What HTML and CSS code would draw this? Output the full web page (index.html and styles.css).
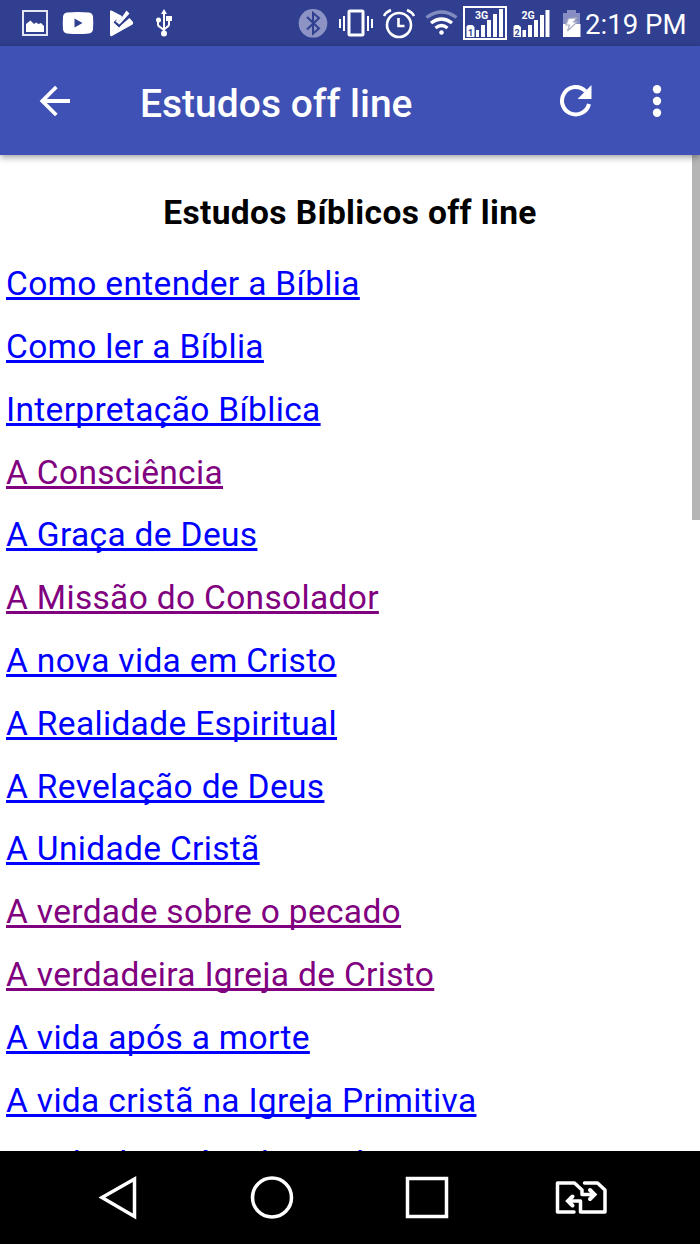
FILE: index.html
```html
<!DOCTYPE html>
<html lang="pt">
<head>
<meta charset="utf-8">
<title>Estudos off line</title>
<link rel="stylesheet" href="styles.css">
</head>
<body>
<div class="screen">
  <header class="status">
    <svg class="status-icons" width="585" height="46" viewBox="0 0 585 46" fill="#fff">
      <path d="M23 11H47V35H23z" fill="none" stroke="#e4e6f4" stroke-width="2"/>
      <path d="M26 32V24L30.500 20.500 34 24 36 22.500 38.500 24 41 23 44 26V32z"/>
      <path fill-rule="evenodd" d="M67 12.500Q78 11.500 89 12.500Q92.500 13 93 16.500Q93.500 23 93 29.500Q92.500 33 89 33.500Q78 34.500 67 33.500Q63.500 33 63 29.500Q62.500 23 63 16.500Q63.500 13 67 12.500zM74.500 18.500V27.500L82.500 23z"/>
      <path d="M110 11.500Q110 10 111.500 10.500L121 15.500Q123 16.500 121 19L119 21.500 116.500 19.500 114 22 119 27 129.500 18 133 22Q133.500 23.500 132.500 24.500L112 36Q110 36.500 110 35z"/>
      <path d="M114.500 21.500L119 25.500 129 12.500" fill="none" stroke="#303f8f" stroke-width="2.600"/>
      <path d="M117 19.500L119 21.500 126.500 10.500 129.500 13.500 119.500 24.500 115.500 21.500z"/>
      <g fill="none" stroke="#fff" stroke-width="2"><path d="M164 33V13M158 21V24.500Q158 26 160 27L164 30M169 21V24.500Q169 26 167 27L164 29.500"/></g>
      <path d="M164 9L167 14H161zM166 16H172V21H166z"/><circle cx="158.500" cy="20" r="2.500"/><circle cx="164" cy="33.500" r="3"/>
      <circle cx="313" cy="23.300" r="14.300" fill="#8d94c5"/>
      <path d="M307 17L319 28.500 313 33.500V13L319 18 307 29.500" fill="none" stroke="#303f8f" stroke-width="2"/>
      <rect x="349" y="11" width="14" height="24" rx="1" fill="none" stroke="#fff" stroke-width="3"/>
      <path d="M344 16V31M340 19V28M368 16V31M372 19V28" stroke="#fff" stroke-width="2"/>
      <g fill="none" stroke="#fff" stroke-width="2.600"><circle cx="399" cy="25" r="12"/><path d="M398.500 18V26H404.500M384 16Q386 12 391 10M407 10Q412 12 414 16"/></g>
      <g fill="none" stroke="#fff" stroke-width="3.400"><path d="M426.500 17.500Q441.500 6.500 456.500 17.500" stroke="#818bc0"/><path d="M431 23Q441.500 15 452 23M435.500 28Q441.500 23 447.500 28"/></g>
      <circle cx="441.500" cy="32.500" r="2.300"/>
      <path d="M464 7H506V39H464z" fill="none" stroke="#fff" stroke-width="2"/>
      <path d="M466.500 26.500L468 25H472.500L474.500 27V37H466.500zM476 30H479V37H476zM481 25H485V37H481zM487 20H491V37H487zM493 14H497V37H493zM499 9H503V37H499z"/>
      <path d="M513.500 26.500L515 25H518.500L521 27V37H513.500zM522.500 30H526V37H522.500zM528 25H532V37H528zM534 20H538V37H534zM540 15H544V37H540zM545.500 10H549.500V37H545.500z"/>
      <g class="network"><text x="475" y="19">3G</text><text x="521.500" y="19">2G</text></g>
      <g class="sim"><text x="468" y="35.500">1</text><text x="514.500" y="35.500">2</text></g>
      <path d="M563 13H567V10H576V13H580V25H563z" fill="#868ec3"/><path d="M563 24H580.500V37H563z"/>
      <path d="M568.500 18.500L576.500 18 573.500 22H577L567.500 31 569.500 25H566z" stroke="#adb2c5" stroke-width="1.200"/>
    </svg>
    <span class="clock">2:19 PM</span>
  </header>
  <nav class="toolbar">
    <svg class="back" width="32" height="32" viewBox="0 0 32 32" fill="none" stroke="#fff" stroke-width="3.800"><path d="M32 16H4M18.300 2L4.300 16 18.300 30"/></svg>
    <h1 class="title">Estudos off line</h1>
    <svg class="refresh" width="34" height="34" viewBox="0 0 34 34"><path d="M30 20A13.700 13.700 0 1 1 26.500 7.200" fill="none" stroke="#fff" stroke-width="4"/><path d="M32.500 1V15H18.500z" fill="#fff"/></svg>
    <svg class="more" width="10" height="34" viewBox="0 0 10 34" fill="#fff"><circle cx="5" cy="5.300" r="4.200"/><circle cx="5" cy="17" r="4.200"/><circle cx="5" cy="28.700" r="4.200"/></svg>
  </nav>
  <main class="content">
    <div class="page">
      <h2 class="heading">Estudos Bíblicos off line</h2>
      <ul class="links">
        <li><a>Como entender a Bíblia</a></li>
        <li><a>Como ler a Bíblia</a></li>
        <li><a>Interpretação Bíblica</a></li>
        <li><a class="visited">A Consciência</a></li>
        <li><a>A Graça de Deus</a></li>
        <li><a class="visited">A Missão do Consolador</a></li>
        <li><a>A nova vida em Cristo</a></li>
        <li><a>A Realidade Espiritual</a></li>
        <li><a>A Revelação de Deus</a></li>
        <li><a>A Unidade Cristã</a></li>
        <li><a class="visited">A verdade sobre o pecado</a></li>
        <li><a class="visited">A verdadeira Igreja de Cristo</a></li>
        <li><a>A vida após a morte</a></li>
        <li><a>A vida cristã na Igreja Primitiva</a></li>
        <li><a>A vida do apóstolo Paulo</a></li>
      </ul>
    </div>
    <div class="scrollbar"></div>
  </main>
  <footer class="navbar">
    <svg width="700" height="93" viewBox="0 0 700 93" fill="none" stroke="#fff" stroke-width="3.500">
      <path d="M102 46.500L134.500 28V65.500z"/>
      <circle cx="272" cy="46.500" r="19.500"/>
      <path d="M407.500 27.500H446.500V65.500H407.500z"/>
      <path d="M574 61H557.500V32H574.500L582 39V43.500H593M584.500 32H597.500L605 39V61H580.500V50H569" stroke-linecap="round" stroke-linejoin="round"/>
      <path d="M590 39L594.500 43.500 590 48M572.500 45.500L568 50 572.500 54.500" stroke-linecap="round" stroke-width="4"/>
    </svg>
  </footer>
</div>
</body>
</html>
```
FILE: styles.css
```css
body {
  margin: 0;
  font-family: Roboto, sans-serif;
}
.screen {
  display: flex;
  flex-direction: column;
  width: 700px;
  height: 1244px;
  overflow: hidden;
  background: #fff;
}
.status {
  display: flex;
  flex: none;
  height: 46px;
  background: #303f8f;
  color: #fff;
}
.status-icons { flex: none; }
.network { font: 700 10.5px Roboto, sans-serif; }
.sim { font: 700 9px Roboto, sans-serif; fill: #303f8f; }
.clock {
  font-size: 27.6px;
  line-height: 49px;
  white-space: nowrap;
}
.toolbar {
  position: relative;
  z-index: 1;
  display: flex;
  flex: none;
  align-items: center;
  box-sizing: border-box;
  height: 109px;
  padding: 0 38px 0 38px;
  background: #3f51b5;
  color: #fff;
  box-shadow: 0 2px 7px rgba(0, 0, 0, .4);
}
.title {
  flex: 1;
  margin: 7px 0 0 70px;
  font-size: 39px;
  font-weight: 500;
  line-height: 47px;
  white-space: nowrap;
}
.refresh { margin-right: 59px; }
.content {
  display: flex;
  flex: none;
  height: 996px;
  overflow: hidden;
}
.page {
  flex: 1;
  padding: 38px 0 0 6px;
}
.heading {
  margin: 0 -2px 0 0;
  font-size: 33.5px;
  font-weight: 700;
  line-height: 40px;
  letter-spacing: .37px;
  text-align: center;
}
.links {
  margin: 20.3px 0 0;
  padding: 0;
  list-style: none;
  font-size: 33.5px;
  line-height: 62.8px;
  letter-spacing: .33px;
  white-space: nowrap;
}
.links li:last-child { padding-top: 1px; }
.links a {
  color: #0000ff;
  text-decoration: underline;
  text-decoration-thickness: 3px;
  text-underline-offset: 2px;
  text-decoration-skip-ink: none;
}
.links .visited { color: #800080; }
.scrollbar {
  flex: none;
  width: 8px;
  height: 365px;
  background: #b5b5b5;
}
.navbar {
  flex: none;
  height: 93px;
  background: #000;
}
```
